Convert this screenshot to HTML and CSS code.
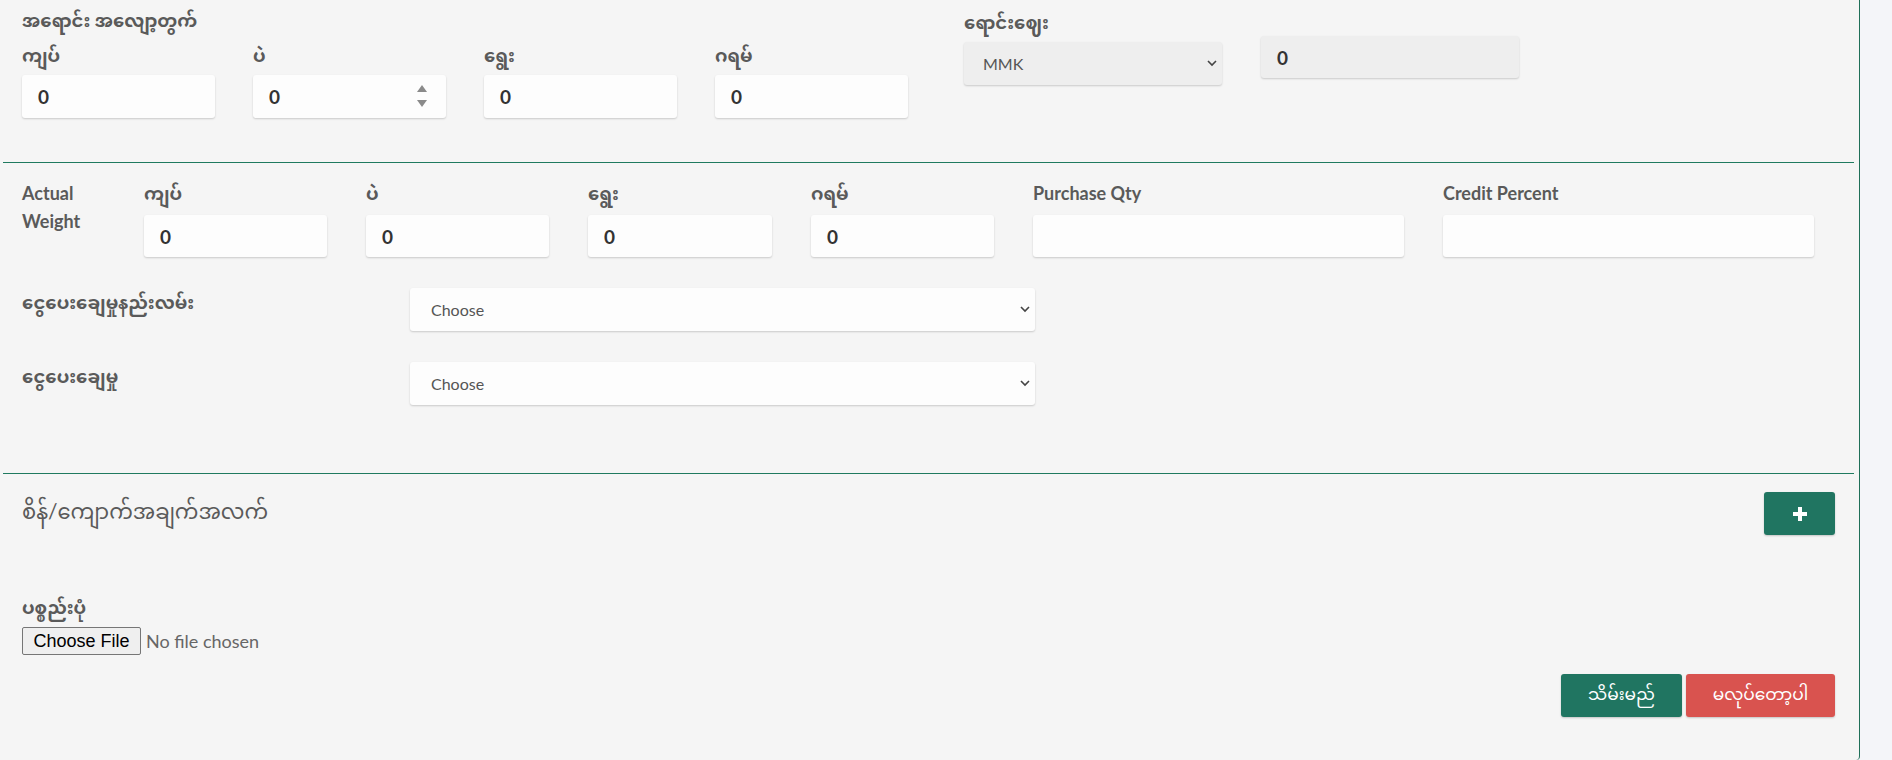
FILE: index.html
```html
<!DOCTYPE html>
<html lang="my">
<head>
<meta charset="utf-8">
<title>Form</title>
<link rel="stylesheet" href="styles.css">
</head>
<body>
<div class="card">
  <section class="sec sec-top">
    <div class="weight-group">
      <div class="title">အရောင်း အလျော့တွက်</div>
      <div class="grid4">
        <div class="field"><label class="lbl">ကျပ်</label><div class="inp val">0</div></div>
        <div class="field"><label class="lbl">ပဲ</label>
          <div class="inp val spin-wrap">0
            <svg class="spin" width="12" height="26" viewBox="0 0 12 26"><path d="M6 2 L11 9 H1 Z" fill="#8a8a8a"/><path d="M6 24 L11 17 H1 Z" fill="#8a8a8a"/></svg>
          </div>
        </div>
        <div class="field"><label class="lbl">ရွေး</label><div class="inp val">0</div></div>
        <div class="field"><label class="lbl">ဂရမ်</label><div class="inp val">0</div></div>
      </div>
    </div>
    <div class="price-group">
      <div class="field cur">
        <label class="lbl">ရောင်းဈေး</label>
        <div class="sel sel-grey">MMK
          <svg class="chev" width="10" height="7" viewBox="0 0 10 7"><path d="M1 1 L5 5 L9 1" fill="none" stroke="#444" stroke-width="1.6"/></svg>
        </div>
      </div>
      <div class="field amt"><div class="inp inp-grey val">0</div></div>
    </div>
  </section>
  <hr class="rule">
  <section class="sec sec-actual">
    <div class="grid7">
      <div class="lbl lbl-actual">Actual<br>Weight</div>
      <div class="field"><label class="lbl">ကျပ်</label><div class="inp val">0</div></div>
      <div class="field"><label class="lbl">ပဲ</label><div class="inp val">0</div></div>
      <div class="field"><label class="lbl">ရွေး</label><div class="inp val">0</div></div>
      <div class="field"><label class="lbl">ဂရမ်</label><div class="inp val">0</div></div>
      <div class="field"><label class="lbl">Purchase Qty</label><div class="inp"></div></div>
      <div class="field"><label class="lbl">Credit Percent</label><div class="inp"></div></div>
    </div>
    <div class="pay-row">
      <label class="lbl pay-lbl">ငွေပေးချေမှုနည်းလမ်း</label>
      <div class="sel sel-white">Choose
        <svg class="chev" width="10" height="7" viewBox="0 0 10 7"><path d="M1 1 L5 5 L9 1" fill="none" stroke="#444" stroke-width="1.6"/></svg>
      </div>
    </div>
    <div class="pay-row">
      <label class="lbl pay-lbl">ငွေပေးချေမှု</label>
      <div class="sel sel-white">Choose
        <svg class="chev" width="10" height="7" viewBox="0 0 10 7"><path d="M1 1 L5 5 L9 1" fill="none" stroke="#444" stroke-width="1.6"/></svg>
      </div>
    </div>
  </section>
  <hr class="rule rule2">
  <section class="sec sec-stone">
    <div class="stone-head">
      <h4 class="stone-title">စိန်/ကျောက်အချက်အလက်</h4>
      <button class="btn btn-green btn-add" type="button">
        <svg width="16" height="16" viewBox="0 0 16 16"><path d="M6 1 H10 V6 H15 V10 H10 V15 H6 V10 H1 V6 H6 Z" fill="#fff"/></svg>
      </button>
    </div>
    <div class="photo">
      <label class="lbl">ပစ္စည်းပုံ</label>
      <div class="file-row"><span class="file-btn">Choose File</span><span class="file-none">No file chosen</span></div>
    </div>
    <div class="actions">
      <button class="btn btn-green btn-save" type="button">သိမ်းမည်</button>
      <button class="btn btn-red btn-cancel" type="button">မလုပ်တော့ပါ</button>
    </div>
  </section>
</div>
</body>
</html>
```
FILE: styles.css
```css
* { box-sizing: border-box; }
html, body { margin: 0; padding: 0; }
body {
  background: #f4f5f9;
  font-family: "Lato", "Noto Sans Myanmar", "Padauk", "Myanmar Text", "Noto Sans", sans-serif;
  color: #5a5a5a;
  width: 1892px;
  height: 760px;
  overflow: hidden;
}
.card {
  width: 1860px;
  height: 760px;
  background: #f5f5f5;
  border-right: 1px solid #1f6f58;
  border-bottom-right-radius: 4px;
}
.lbl {
  display: block;
  font-weight: 700;
  font-size: 18px;
  line-height: 28px;
  color: #5a5a5a;
}
.field { display: flex; flex-direction: column; }
.inp {
  height: 42px;
  background: #fdfdfd;
  border-radius: 3px;
  box-shadow: 0 1px 2px rgba(0,0,0,0.18);
  padding: 0 16px;
  display: flex;
  align-items: center;
  position: relative;
}
.val { font-weight: 700; font-size: 19px; color: #333; }
.inp-grey { background: #eeeeee; }
.spin { position: absolute; right: 18px; top: 8px; }

.sec-top {
  height: 162px;
  padding: 6px 0 0 22px;
  display: flex;
}
.title { font-weight: 700; font-size: 18px; line-height: 29px; color: #5a5a5a; }
.grid4 {
  margin-top: 6px;
  display: grid;
  grid-template-columns: repeat(4, 193px);
  column-gap: 38px;
}
.grid4 .lbl { margin-bottom: 6px; }
.grid4 .inp { height: 43px; }
.price-group { display: flex; margin-left: 56px; gap: 39px; }
.cur { width: 258px; padding-top: 2px; }
.cur .lbl { margin-bottom: 6px; }
.amt { width: 258px; padding-top: 30px; }
.sel {
  height: 43px;
  border-radius: 3px;
  box-shadow: 0 1px 2px rgba(0,0,0,0.18);
  display: flex;
  align-items: center;
  padding: 0 19px;
  font-size: 16px;
  color: #555;
  position: relative;
}
.sel-grey { background: #eeeeee; }
.sel-white { background: #fdfdfd; width: 625px; padding-left: 21px; }
.chev { position: absolute; right: 5px; top: 18px; }

.rule {
  margin: 0 5px 0 3px;
  border: 0;
  border-top: 1px solid #1f7a5f;
  height: 0;
}
.sec-actual { height: 310px; padding: 16px 0 0 22px; }
.grid7 {
  display: grid;
  grid-template-columns: 83px 183px 183px 184px 183px 371px 371px;
  column-gap: 39px;
}
.grid7 .lbl { margin-bottom: 8px; }
.lbl-actual { line-height: 28px; }
.pay-row { display: flex; align-items: flex-start; margin-top: 31px; }
.pay-row + .pay-row { margin-top: 31px; }
.pay-lbl { width: 388px; padding-top: 0; }

.sec-stone { padding: 0 24px 0 22px; }
.stone-head { display: flex; justify-content: space-between; align-items: flex-start; padding-top: 18px; }
.stone-title { margin: 3px 0 0; font-weight: 400; font-size: 21px; line-height: 32px; color: #5a5a5a; }
.btn {
  border: 0;
  border-radius: 3px;
  color: #fff;
  font-family: "Noto Sans Myanmar", "Padauk", "Myanmar Text", "Lato", sans-serif;
  font-size: 17px;
  cursor: pointer;
  box-shadow: 0 1px 2px rgba(0,0,0,0.2);
}
.btn-green { background: #207561; }
.btn-red { background: #d9534f; }
.btn-add { width: 71px; height: 43px; display: flex; align-items: center; justify-content: center; }
.photo { margin-top: 58px; }
.file-row { display: flex; align-items: center; margin-top: 6px; }
.file-btn {
  font-family: "Liberation Sans", Arial, sans-serif;
  font-size: 18px;
  color: #000;
  background: #efefef;
  border: 1px solid #767676;
  border-radius: 2px;
  height: 28px;
  width: 119px;
  display: flex; align-items: center; justify-content: center;
}
.file-none { margin-left: 5px; font-size: 18px; color: #666; }
.actions { display: flex; justify-content: flex-end; gap: 4px; margin-top: 19px; }
.btn-save { width: 121px; height: 43px; }
.btn-cancel { width: 149px; height: 43px; }
```
